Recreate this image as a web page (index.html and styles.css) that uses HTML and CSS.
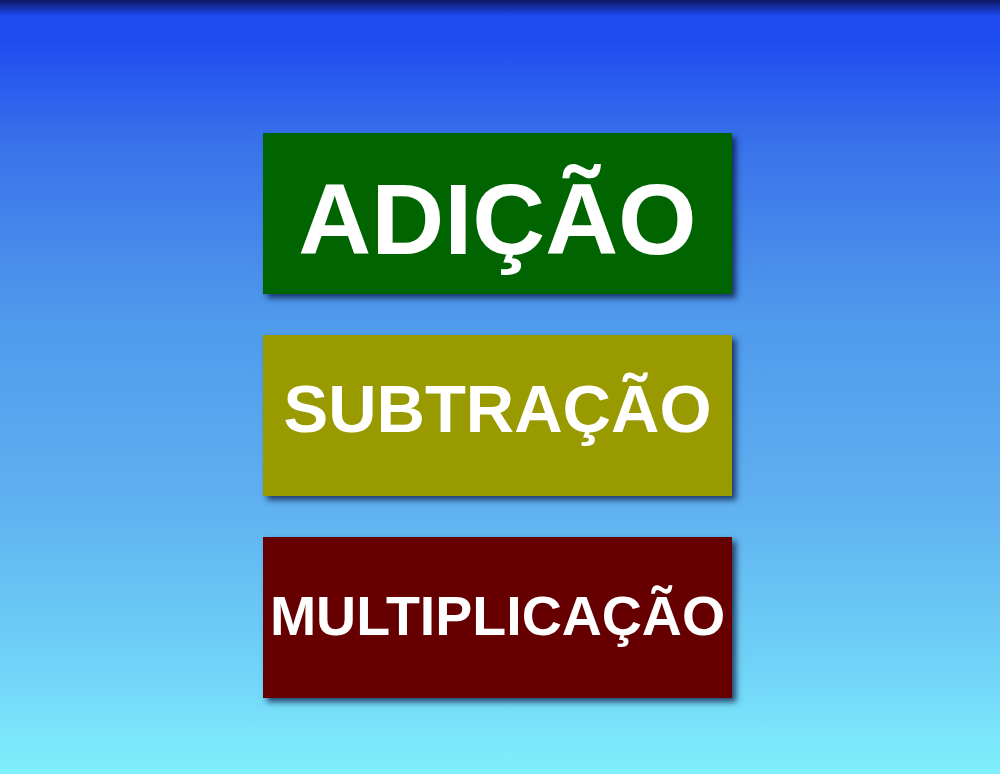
FILE: index.html
```html
<!DOCTYPE html>
<html lang="pt">
<head>
    <meta charset="UTF-8">
    <meta name="viewport" content="width=device-width, initial-scale=1.0">
    <title>Operações</title>
    <link rel="stylesheet" href="styles.css">
</head>
<body>
    <div class="menu">
        <div class="option adicao">ADIÇÃO</div>
        <div class="option subtracao">SUBTRAÇÃO</div>
        <div class="option multiplicacao">MULTIPLICAÇÃO</div>
    </div>
</body>
</html>
```

FILE: styles.css
```css
html, body {
    margin: 0;
    height: 100%;
}

body {
    min-height: 774px;
    background:
        linear-gradient(to bottom, rgba(12, 22, 90, 0.95) 0, rgba(20, 50, 200, 0) 16px),
        linear-gradient(to bottom, #1e48f2 0, #1f4cf0 40px, #3a74ea 150px, #4f9aec 320px, #5fb0f0 500px, #72d6f8 680px, #80f0fc 774px);
    font-family: "Comic Sans MS", "Liberation Sans", Arial, sans-serif;
}

.menu {
    display: flex;
    flex-direction: column;
    align-items: center;
    gap: 41px;
    padding: 133px 5px 0 0;
}

.option {
    width: 469px;
    height: 161px;
    box-sizing: border-box;
    display: flex;
    align-items: center;
    justify-content: center;
    color: #fff;
    font-weight: bold;
    cursor: pointer;
    box-shadow: 4px 4px 6px rgba(10, 20, 60, 0.75);
}

.adicao {
    background-color: #006400;
    font-size: 101px;
    padding-top: 12px;
}

.subtracao {
    background-color: #999900;
    font-size: 67px;
    padding-bottom: 14px;
}

.multiplicacao {
    background-color: #660000;
    font-size: 55.5px;
    padding-bottom: 3px;
}
```
